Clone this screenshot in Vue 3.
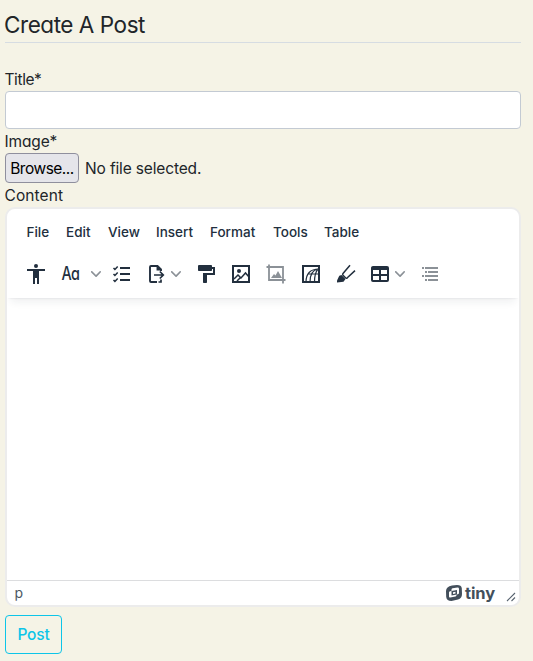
<script setup>
const menus = [
  { label: 'File', cls: 'm-file' },
  { label: 'Edit', cls: 'm-edit' },
  { label: 'View', cls: 'm-view' },
  { label: 'Insert', cls: 'm-insert' },
  { label: 'Format', cls: 'm-format' },
  { label: 'Tools', cls: 'm-tools' },
  { label: 'Table', cls: 'm-table' },
]
const chevron = 'M8.7 2.2c.3-.3.8-.3 1 0 .4.4.4.9 0 1.2L5.7 7.8c-.3.3-.9.3-1.2 0L.2 3.4a.8.8 0 0 1 0-1.2c.3-.3.8-.3 1.1 0L5 6l3.7-3.8Z'
</script>

<template>
  <main class="page">
    <h1 class="heading">Create A Post</h1>
    <form class="form" @submit.prevent>
      <label class="label title-label" for="title">Title*</label>
      <input id="title" class="input" type="text" />
      <label class="label">Image*</label>
      <div class="file-row">
        <button type="button" class="browse">Browse...</button>
        <span class="no-file">No file selected.</span>
      </div>
      <label class="label content-label">Content</label>

      <section class="editor">
        <header class="editor-head">
          <nav class="menubar">
            <span v-for="m in menus" :key="m.label" :class="m.cls">{{ m.label }}</span>
          </nav>
          <div class="toolbar">
            <svg class="icon" viewBox="0 0 24 24"><circle cx="12" cy="4" r="2" /><path d="M3 7h18v2h-6v13h-2v-6h-2v6H9V9H3Z" /></svg>
            <span class="case">Aa</span>
            <svg class="chev" viewBox="0 0 10 10"><path :d="chevron" /></svg>
            <svg class="icon line" viewBox="0 0 24 24"><path d="M10 6h10M10 12h10M10 18h10" stroke-width="1.800" /><path d="m3.500 6 1.400 1.400L7.700 4.400M3.500 12l1.400 1.400 2.800-3M3.500 18l1.400 1.400 2.800-3" stroke-width="1.500" /></svg>
            <svg class="icon line" viewBox="0 0 24 24"><path d="M16 9V7.500L12.500 4H6a1 1 0 0 0-1 1v14a1 1 0 0 0 1 1h6M12.500 4v3.500H16" stroke-width="1.900" /><path d="M13.500 20H16v-2.500M9 13h9.500M14.800 9.500 18.300 13l-3.500 3.500" stroke-width="1.700" /></svg>
            <svg class="chev" viewBox="0 0 10 10"><path :d="chevron" /></svg>
            <svg class="icon roller" viewBox="0 0 24 24"><path d="M18 5V4c0-.5-.4-1-1-1H5a1 1 0 0 0-1 1v4c0 .6.5 1 1 1h12c.6 0 1-.4 1-1V7h1v4H9v9c0 .6.4 1 1 1h2c.6 0 1-.4 1-1v-7h8V5h-3Z" /></svg>
            <svg class="icon line" viewBox="0 0 24 24"><path d="M4 4h16v16H4Z" stroke-width="2" /><circle class="solid" cx="10" cy="9" r="2" /><path d="m5 17 4-4 3 3 4.500-5L20 15M8 19l4-4" stroke-width="1.500" /></svg>
            <svg class="icon line dim" viewBox="0 0 24 24"><path d="M5 2.500V18h16.500M2.500 5H19v16.500" stroke-width="1.800" /><path class="solid" d="m7 16 3-4 1.500 1.500L14 9l4 7Z" /></svg>
            <svg class="icon line" viewBox="0 0 24 24"><path d="M4 4h16v16H4Z" stroke-width="2" /><path d="M7 20c0-8 4-13 13-13M11 20c0-7 3-12 8-13M15.500 20c0-6 1-10 3.500-13M9 12h11" stroke-width="1.200" /></svg>
            <svg class="icon line" viewBox="0 0 24 24"><path d="M16 3.300 9 11.500c-.5.600-.5 1.100 0 1.700l2.500 2.500c.6.600 1.200.6 1.800.1l7.700-7.200" stroke-width="1.500" /><path class="solid" d="m7.500 13 4 4-2 2.700L3 20.500v-2l2.300-4.700Z" /></svg>
            <svg class="icon" viewBox="0 0 24 24"><path fill-rule="evenodd" d="M19 4a2 2 0 0 1 2 2v12a2 2 0 0 1-2 2H5a2 2 0 0 1-2-2V6c0-1.100.9-2 2-2h14ZM5 14v4h6v-4H5Zm14 0h-6v4h6v-4Zm0-6h-6v4h6V8ZM5 12h6V8H5v4Z" /></svg>
            <svg class="chev" viewBox="0 0 10 10"><path :d="chevron" /></svg>
            <svg class="icon line dim" viewBox="0 0 24 24"><path d="M4 6h2M7 6h13M7 10h2M10 10h10M4 14h2M7 14h13M7 18h2M10 18h10" stroke-width="1.800" /></svg>
          </div>
        </header>
        <div class="canvas"></div>
        <footer class="status">
          <span class="path">p</span>
          <span class="brand">
            <svg class="logo" viewBox="0 0 16 16"><path fill-rule="evenodd" d="M6 .4 11 0c3 0 4.500 1.200 4.800 3.200L16 9c0 3-1.200 4.800-4 5.600L5.500 16C2.200 16 .5 14.600.2 12L0 6C.2 3 2 1.200 6 .4ZM6.500 3.300Q5.500 3.500 5.500 4.500V6L4 6.300Q3 6.500 3 7.500v4Q3 12.700 4.200 12.500L9.500 11.500Q10.500 11.300 10.500 10.300V9.500L12 9.200Q13 9 13 8V4Q13 2.500 11.500 2.600Z" /><path d="M5.500 6 11 5v4.500L5.500 10.500ZM7 7.200V8.900L9.500 8.400V6.700Z" fill-rule="evenodd" /></svg>
            <span class="brand-name">tiny</span>
          </span>
          <svg class="grip" viewBox="0 0 10 10"><path d="M1 9 9 1M5.500 9 9 5.500" /></svg>
        </footer>
      </section>
      <button type="submit" class="post">Post</button>
    </form>
  </main>
</template>

<style>
body { margin: 0; background: #f5f3e6; }
</style>

<style scoped>
* { box-sizing: border-box; }
.page {
  height: 661px;
  padding: 7px 12px 0 5px;
  background: #f5f3e6;
  color: #212529;
  font-family: Inter, Lato, sans-serif;
  font-feature-settings: "cv11";
  font-size: 15.5px;
  line-height: 24px;
  overflow: hidden;
  white-space: nowrap;
}
.heading {
  height: 36px;
  margin: 0 0 24px;
  border-bottom: 1px solid #d6dce2;
  font-size: 22.5px;
  font-weight: 380;
  line-height: 36px;
  letter-spacing: -.45px;
  text-indent: -1px;
}
.form, .editor { display: flex; flex-direction: column; }
.label { height: 24px; padding-top: 1px; font-weight: 380; letter-spacing: -.15px; text-indent: -.5px; }
.title-label { letter-spacing: -.4px; }
.content-label { letter-spacing: .1px; }
.input {
  width: 100%;
  height: 38px;
  border: 1px solid #c3cad3;
  border-radius: 4px;
  background: #fff;
}
.file-row { display: flex; align-items: center; gap: 6px; height: 30px; letter-spacing: -.15px; font-weight: 380; }
.no-file { padding-top: 2px; }
.browse {
  width: 74px;
  height: 30px;
  padding: 2px 0 0;
  border: 1px solid #8f8f9d;
  border-radius: 4px;
  background: #e5e5ea;
  color: #000;
  font: inherit;
  font-feature-settings: inherit;
  letter-spacing: -.5px;
}
.editor {
  height: 400px;
  border: 2px solid #ececec;
  border-radius: 10px;
  background: #fff;
  color: #222f3e;
  overflow: hidden;
}
.editor-head {
  height: 89px;
  padding-top: 3px;
  box-shadow: 0 2px 2px -2px rgba(34, 47, 62, .12), 0 8px 8px -4px rgba(34, 47, 62, .07);
}
.menubar {
  display: grid;
  grid-template-columns: 39.500px 42px 48px 54px 63.500px 50.500px auto;
  height: 39px;
  padding-left: 19.5px;
  align-items: center;
  font-size: 13.5px;
  font-weight: 500;
  font-feature-settings: normal;
}
.m-tools { margin-left: -.5px; }
.toolbar {
  display: grid;
  grid-template-columns: 35px 32px 19px 35px 26px 24px 34px 35px 35px 35px 34px 27px 23px 24px;
  height: 46px;
  padding-left: 17px;
  align-items: center;
}
.icon { width: 24px; height: 24px; fill: #222f3e; }
.roller { margin-left: -1px; }
.line { fill: none; stroke: #222f3e; }
.solid { fill: #222f3e; stroke: none; }
.dim { stroke: #8b9197; }
.dim .solid { fill: #8b9197; }
.chev { width: 10px; height: 10px; fill: #8b9197; }
.case { padding-left: 3px; font-size: 18px; font-weight: 500; letter-spacing: -.5px; transform: scaleX(.8); transform-origin: left; }
.canvas { flex: 1; }
.status {
  display: flex;
  align-items: center;
  height: 25px;
  padding: 0 3px 0 7.5px;
  border-top: 1px solid #dcdddf;
  color: #4c5763;
}
.path { font-size: 14px; }
.brand { display: flex; align-items: center; gap: 3px; margin-left: auto; }
.logo { width: 16px; height: 16px; fill: #434f5b; }
.brand-name { color: #434f5b; font-size: 16.5px; font-weight: 700; letter-spacing: -.1px; }
.grip { width: 10px; height: 10px; margin: 7px 0 0 11px; fill: none; stroke: #596470; stroke-width: 1.1; }
.post {
  width: 57px;
  height: 39px;
  margin-top: 8px;
  padding: 0;
  border: 1px solid #0dc5e8;
  border-radius: 4px;
  background: transparent;
  color: #0dc5e8;
  font: inherit;
  font-weight: 450;
  letter-spacing: -.2px;
}
</style>
